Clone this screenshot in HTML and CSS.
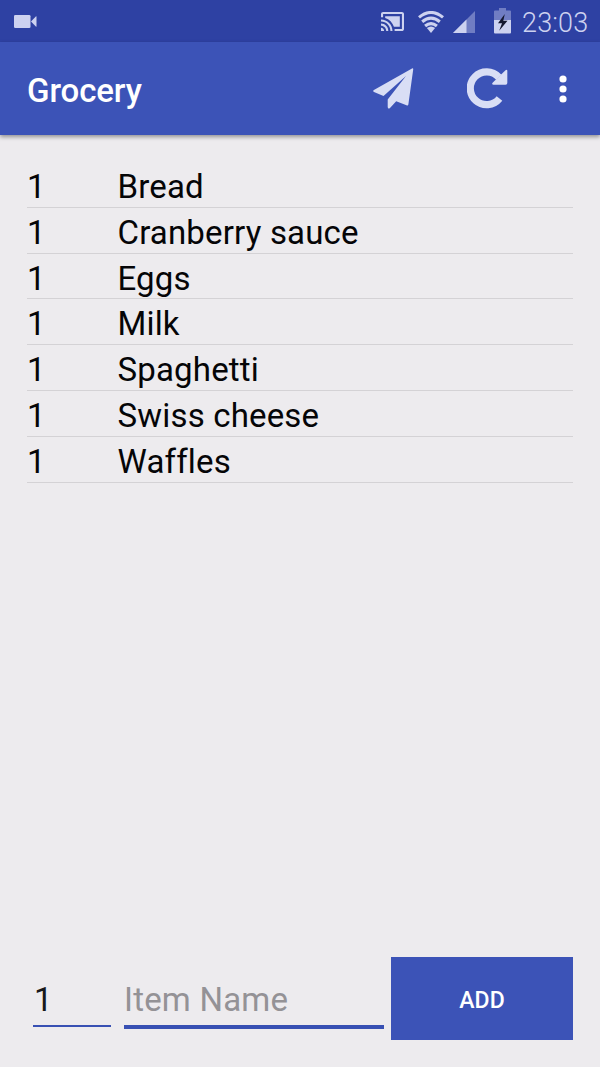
FILE: index.html
```html
<!DOCTYPE html>
<html lang="en">
<head>
<meta charset="utf-8">
<title>Grocery</title>
<link rel="stylesheet" href="styles.css">
</head>
<body>
<div class="screen">
  <header class="status-bar">
    <svg class="camera" width="23" height="13" viewBox="0 0 23 13"><rect width="16.500" height="13" rx="1.300"/><path d="M17 6.500 21.800 1.400Q22.500 1 22.500 1.800v9.400q0 .8-.7.4z"/></svg>
    <div class="status-icons">
      <svg class="cast" width="23" height="19" viewBox="1 3 22 18" preserveAspectRatio="none"><path d="M1 18v3h3c0-1.660-1.340-3-3-3zm0-4v2c2.760 0 5 2.240 5 5h2c0-3.870-3.130-7-7-7zm18-7H5v1.630c3.960 1.280 7.090 4.410 8.370 8.370H19V7zM1 10v2c4.970 0 9 4.030 9 9h2c0-6.080-4.930-11-11-11zm20-7H3c-1.100 0-2 .9-2 2v3h2V5h18v14h-7v2h7c1.100 0 2-.9 2-2V5c0-1.100-.9-2-2-2z"/></svg>
      <svg class="wifi" width="26" height="22" viewBox="0 0 26 22"><path d="M13 22 8.900 17Q13 13.800 17.100 17z"/><path d="M1 6.400Q13-3.400 25 6.400M4.200 10.800Q13 3.600 21.800 10.800M7.100 15Q13 10.100 18.900 15" fill="none" stroke="currentColor" stroke-width="3.100"/></svg>
      <svg class="signal" width="22" height="22" viewBox="0 0 22 22"><path d="M22 0v22H0z" opacity=".42"/><path d="M13.500 8.500V22H0z"/></svg>
      <svg class="battery" width="17" height="26" viewBox="0 0 17 26"><path d="M0 3.500Q0 2.500 1 2.500H5V0h7v2.500h4q1 0 1 1V12H0z" opacity=".42"/><path d="M0 12h17v12.500q0 1-1 1H1q-1 0-1-1z"/><path d="M10.800 6 4 15.200h4L5.200 22.800 13.500 12.700H9.300z" fill="#15182f"/></svg>
      <span class="clock">23:03</span>
    </div>
  </header>
  <div class="app-bar">
    <h1 class="title">Grocery</h1>
    <svg class="send" width="41" height="41" viewBox="0 0 41 41"><path d="M39 .5Q40.400-.1 40.200 1.500L35.400 36.200Q35.200 38 33.500 37.300L23.200 33.200 17 40Q15 41.500 14.700 39V31.500L33 8 10.500 28 1 23.900Q-.6 23 .9 22z"/></svg>
    <svg class="refresh" width="41" height="41" viewBox="0 0 41 41"><path d="M31.800 9.200A16.400 16.400 0 1 0 32.500 30.500" fill="none" stroke="currentColor" stroke-width="7.200"/><path d="M38.500 2.200Q40.300.8 40.300 3V15Q40.300 16.700 38.600 16.700H26.500Q24.300 16.400 25.600 14.800z"/></svg>
    <svg class="more" width="8" height="28" viewBox="0 0 8 28"><circle cx="4" cy="4" r="3.600"/><circle cx="4" cy="14" r="3.600"/><circle cx="4" cy="24" r="3.600"/></svg>
  </div>
  <main class="list">
    <div class="row"><span class="qty">1</span><span>Bread</span></div>
    <div class="row"><span class="qty">1</span><span>Cranberry sauce</span></div>
    <div class="row"><span class="qty">1</span><span>Eggs</span></div>
    <div class="row"><span class="qty">1</span><span>Milk</span></div>
    <div class="row"><span class="qty">1</span><span>Spaghetti</span></div>
    <div class="row"><span class="qty">1</span><span>Swiss cheese</span></div>
    <div class="row"><span class="qty">1</span><span>Waffles</span></div>
  </main>
  <form class="add-form">
    <input class="field field-qty" type="text" value="1" aria-label="Quantity">
    <input class="field field-name" type="text" placeholder="Item Name" aria-label="Item name">
    <button class="add" type="button">ADD</button>
  </form>
</div>
</body>
</html>
```
FILE: styles.css
```css
* { box-sizing: border-box; }
body {
  margin: 0;
  background: #edebee;
  color: #050507;
  font-family: Roboto, "Liberation Sans", sans-serif;
}
svg { display: block; fill: currentColor; flex: none; }
.screen { height: 1067px; display: flex; flex-direction: column; overflow: hidden; }
.status-bar {
  height: 42px;
  flex: none;
  display: flex;
  justify-content: space-between;
  align-items: flex-start;
  padding: 0 12px 0 14px;
  background: #2e41a3;
  color: #cdd2f0;
}
.camera { margin-top: 15px; }
.status-icons { display: flex; align-items: flex-start; }
.cast { margin-top: 12px; }
.wifi { margin: 11px 0 0 14px; }
.signal { margin: 11px 0 0 9px; }
.battery { margin: 8px 0 0 19px; }
.clock {
  width: 66px;
  margin-left: 11px;
  font-size: 27px;
  font-weight: 300;
  letter-spacing: .15px;
  line-height: 47px;
  white-space: nowrap;
}
.app-bar {
  height: 93px;
  flex: none;
  display: flex;
  align-items: center;
  padding: 0 33px 0 27px;
  background: #3c53b7;
  box-shadow: 0 2px 4px rgba(0, 0, 0, .38);
  color: #d9def5;
}
.title {
  flex: 1;
  margin: 5px 0 0;
  color: #fff;
  font-size: 33px;
  font-weight: 500;
  letter-spacing: -.1px;
  line-height: 40px;
}
.send { margin-right: 53px; }
.refresh { margin-right: 51px; }
.more { color: #fff; }
.list { flex: 1; padding: 27px 27px 0; }
.row {
  display: flex;
  height: 45.83px;
  border-bottom: 1px solid #d4d2d5;
  font-size: 33px;
  font-variant-ligatures: none;
  letter-spacing: .17px;
  line-height: 49.5px;
}
.qty { width: 90.5px; }
.add-form {
  height: 83px;
  flex: none;
  display: flex;
  margin: 0 27px 27px 33px;
}
.field {
  min-width: 0;
  height: 70px;
  padding: 17px 0 0;
  border: 0 solid #3850b3;
  border-radius: 0;
  outline: 0;
  background: transparent;
  color: #18181a;
  font: 33px Roboto, "Liberation Sans", sans-serif;
  letter-spacing: .2px;
}
.field::placeholder { color: #949296; opacity: 1; }
.field-qty { width: 78px; padding-left: 1px; border-bottom-width: 2px; }
.field-name { width: 260px; height: 72px; margin: 0 7px 0 13px; border-bottom-width: 4px; }
.add {
  flex: 1;
  padding: 3px 0 0;
  border: 0;
  background: #3c53b7;
  color: #fff;
  font: 500 23px Roboto, "Liberation Sans", sans-serif;
}
```
